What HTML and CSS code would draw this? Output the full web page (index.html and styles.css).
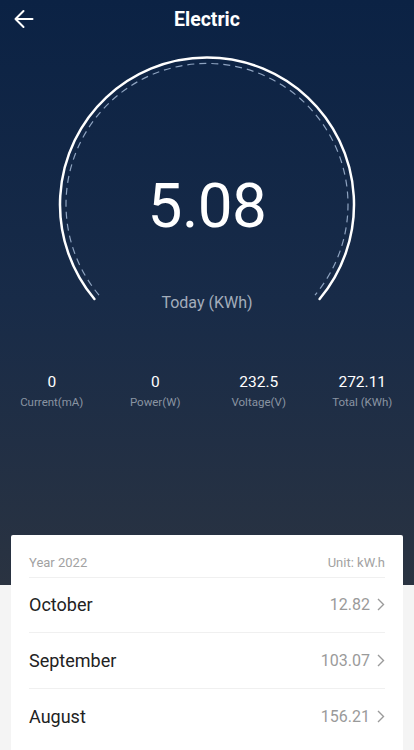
FILE: index.html
```html
<!DOCTYPE html>
<html lang="en">
<head>
<meta charset="utf-8">
<title>Electric</title>
<link rel="stylesheet" href="styles.css">
</head>
<body>
<div class="page">
  <header class="topbar">
    <button class="back" aria-label="Back">
      <svg width="20" height="20" viewBox="0 0 20 20" fill="none" stroke="#fff" stroke-width="2" stroke-linecap="round" stroke-linejoin="round">
        <path d="M18.5 10H1.5M9.5 2L1.5 10L9.5 18"/>
      </svg>
    </button>
    <h1 class="title">Electric</h1>
    <span></span>
  </header>

  <section class="gauge">
    <svg class="gauge-ring" width="414" height="292" viewBox="0 0 414 292" fill="none">
      <path d="M94.4 261 A147 147 0 1 1 319.6 261" stroke="#fff" stroke-width="2.5" stroke-linecap="round"/>
      <path d="M99 257.1 A141 141 0 1 1 315 257.1" stroke="#8ea3c0" stroke-width="1.2" stroke-dasharray="7 5"/>
    </svg>
    <div class="gauge-text">
      <div class="gauge-value">5.08</div>
      <div class="gauge-label">Today (KWh)</div>
    </div>
  </section>

  <section class="stats">
    <div class="stat"><div class="stat-value">0</div><div class="stat-label">Current(mA)</div></div>
    <div class="stat"><div class="stat-value">0</div><div class="stat-label">Power(W)</div></div>
    <div class="stat"><div class="stat-value">232.5</div><div class="stat-label">Voltage(V)</div></div>
    <div class="stat"><div class="stat-value">272.11</div><div class="stat-label">Total (KWh)</div></div>
  </section>

  <section class="card">
    <div class="card-head">
      <span>Year 2022</span>
      <span>Unit: kW.h</span>
    </div>
    <div class="row">
      <span class="month">October</span>
      <span class="amount">12.82<svg class="chev" width="8" height="13" viewBox="0 0 8 13" fill="none" stroke="#9a9a9a" stroke-width="1.4"><path d="M1 1L6.5 6.5L1 12"/></svg></span>
    </div>
    <div class="row">
      <span class="month">September</span>
      <span class="amount">103.07<svg class="chev" width="8" height="13" viewBox="0 0 8 13" fill="none" stroke="#9a9a9a" stroke-width="1.4"><path d="M1 1L6.5 6.5L1 12"/></svg></span>
    </div>
    <div class="row">
      <span class="month">August</span>
      <span class="amount">156.21<svg class="chev" width="8" height="13" viewBox="0 0 8 13" fill="none" stroke="#9a9a9a" stroke-width="1.4"><path d="M1 1L6.5 6.5L1 12"/></svg></span>
    </div>
  </section>
</div>
</body>
</html>
```

FILE: styles.css
```css
* { box-sizing: border-box; }

html, body {
  margin: 0;
  padding: 0;
}

body {
  font-family: Roboto, "Noto Sans", "Liberation Sans", sans-serif;
  background: linear-gradient(to bottom, #0b2244 0px, #182b48 300px, #2a3341 585px, #f4f4f4 585px, #f4f4f4 100%);
  min-height: 750px;
  overflow: hidden;
}

.page {
  display: flex;
  flex-direction: column;
}

.topbar {
  height: 38px;
  display: grid;
  grid-template-columns: 1fr auto 1fr;
  align-items: center;
  padding: 0 14px;
}

.back {
  background: none;
  border: 0;
  padding: 0;
  width: 20px;
  height: 20px;
  display: flex;
  cursor: pointer;
}

.title {
  margin: 0;
  color: #fff;
  font-size: 19.5px;
  font-weight: 700;
  line-height: 1;
  padding-top: 1px;
}

.gauge {
  display: grid;
  height: 292px;
}

.gauge-ring,
.gauge-text {
  grid-area: 1 / 1;
}

.gauge-text {
  display: flex;
  flex-direction: column;
  align-items: center;
  padding-top: 137px;
}

.gauge-value {
  color: #fff;
  font-size: 62px;
  line-height: 1;
  letter-spacing: -0.5px;
}

.gauge-label {
  margin-top: 58px;
  color: #a3adbb;
  font-size: 16px;
  line-height: 1;
}

.stats {
  display: grid;
  grid-template-columns: repeat(4, 1fr);
  padding-top: 43.5px;
}

.stat {
  display: flex;
  flex-direction: column;
  align-items: center;
}

.stat-value {
  color: #fff;
  font-size: 15.5px;
  line-height: 16px;
}

.stat-label {
  margin-top: 7px;
  color: #8a94a2;
  font-size: 11.5px;
  line-height: 11.5px;
}

.card {
  margin: 0 11px;
  margin-top: 126.5px;
  background: #fff;
  border-radius: 2px 2px 0 0;
  padding: 0 18px 30px;
}

.card-head {
  display: flex;
  justify-content: space-between;
  padding: 21px 0 8px;
  font-size: 13px;
  line-height: 13px;
  color: #a2a2a2;
  border-bottom: 1px solid #f0f0f0;
}

.row {
  height: 55.5px;
  display: flex;
  align-items: center;
  justify-content: space-between;
  border-bottom: 1px solid #f0f0f0;
}

.row:last-child {
  border-bottom: 0;
}

.month {
  font-size: 18px;
  color: #222;
}

.amount {
  display: flex;
  align-items: center;
  gap: 7px;
  font-size: 16px;
  color: #9a9a9a;
}

.chev {
  display: block;
}
```
